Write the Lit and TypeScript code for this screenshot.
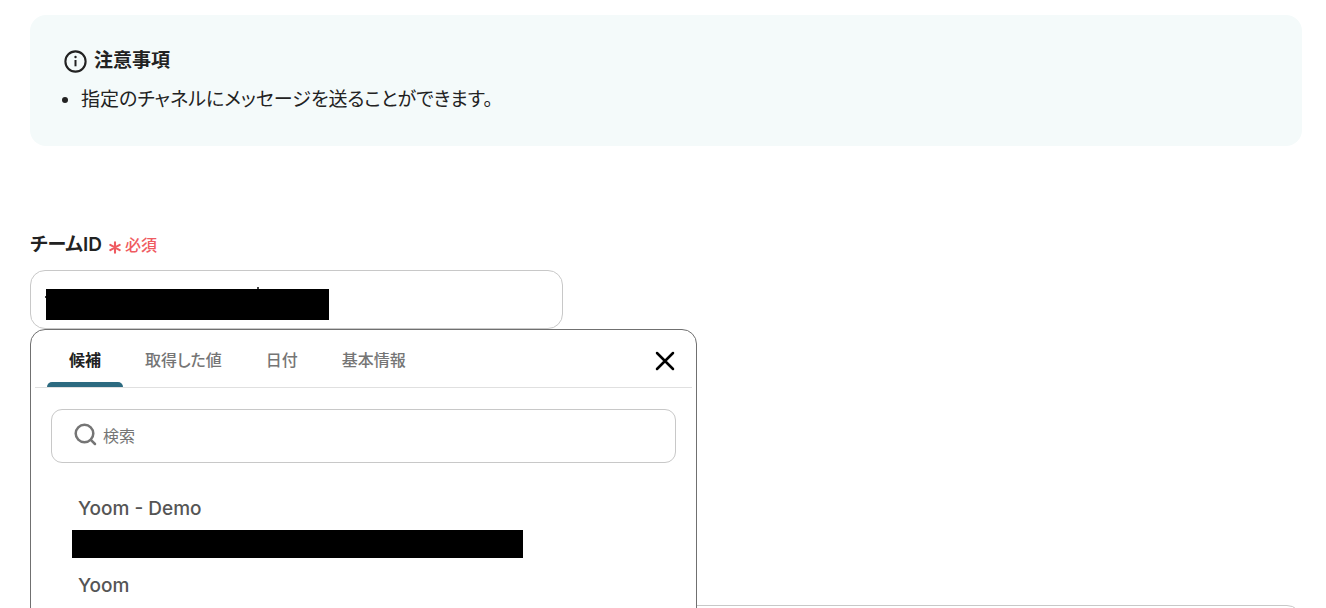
import { LitElement, html, css } from "lit";
import { customElement, state } from "lit/decorators.js";

@customElement("app-root")
export class AppRoot extends LitElement {
  static styles = css`
    * {
      box-sizing: border-box;
    }
    :host {
      display: block;
      height: 100vh;
      overflow: hidden;
      padding: 15px 24px 0 30px;
      background: #fff;
      color: #222;
      font-family: Inter, "Noto Sans CJK JP", sans-serif;
      font-feature-settings: "palt";
      font-size: 19px;
      line-height: 28px;
    }
    button,
    input,
    textarea {
      margin: 0;
      font: inherit;
      color: inherit;
      font-feature-settings: inherit;
    }
    button {
      padding: 0;
      border: 0;
      background: none;
      cursor: pointer;
    }
    svg {
      display: block;
      flex: none;
    }
    .notice {
      padding: 32px 34px;
      border-radius: 16px;
      background: #f4fafa;
    }
    .notice-title {
      display: flex;
      align-items: center;
      gap: 7px;
      margin: 0;
      font-size: 19px;
      font-weight: 600;
    }
    .notice-list {
      margin: 0;
      padding: 11px 0 0 17px;
    }
    .field {
      padding-top: 85px;
    }
    .field-head {
      display: flex;
      align-items: center;
      gap: 7px;
      padding-bottom: 11px;
    }
    .field-label {
      font-weight: 600;
    }
    .required {
      display: flex;
      align-items: center;
      gap: 4px;
      color: #ef5b61;
      font-size: 16px;
      font-weight: 500;
    }
    .required-mark {
      margin-top: 4px;
    }
    .field-control {
      position: relative;
      width: 533px;
      max-width: 100%;
    }
    .field-input {
      display: block;
      width: 100%;
      height: 59px;
      padding: 0 15px;
      border: 1px solid #c8c8c8;
      border-radius: 15px;
      outline: none;
      background: #fff;
    }
    .mask {
      position: absolute;
      top: 16px;
      left: 14px;
    }
    .panel {
      position: absolute;
      top: 100%;
      left: 0;
      z-index: 1;
      width: 667px;
      height: 420px;
      border: 1px solid #707070;
      border-radius: 15px;
      background: #fff;
    }
    .panel-head {
      display: flex;
      align-items: stretch;
      margin: 0 4px;
      padding: 0 17px 0 12px;
      border-bottom: 1px solid #e0e0e0;
    }
    .tabs {
      display: flex;
      flex: 1;
    }
    .tab-item {
      display: grid;
      grid-template-rows: 52px 5px;
    }
    .tab {
      padding: 8px 22px 0;
      color: #757575;
      font-size: 16px;
      font-weight: 500;
      line-height: 24px;
      white-space: nowrap;
    }
    .tab[aria-selected="true"] {
      color: #222;
      font-weight: 700;
    }
    .tab-bar {
      border-radius: 5px 5px 0 0;
      background: #2c6a80;
    }
    .close {
      display: flex;
      align-items: center;
      padding-top: 5px;
      color: #000;
    }
    .search {
      display: flex;
      align-items: center;
      gap: 6px;
      height: 54px;
      margin: 21px 20px 0;
      padding: 0 22px;
      border: 1px solid #c8c8c8;
      border-radius: 11px;
      color: #757575;
    }
    .search-icon {
      margin-bottom: 3px;
    }
    .search-input {
      flex: 1;
      min-width: 0;
      padding: 0;
      border: 0;
      outline: none;
      background: none;
      font-size: 16px;
    }
    .search-input::placeholder {
      color: #757575;
      opacity: 1;
    }
    .options {
      display: grid;
      gap: 14px;
      margin: 0;
      padding: 32px 41px 0;
      list-style: none;
    }
    .option {
      display: grid;
      justify-items: start;
      gap: 7px;
      width: 100%;
      padding: 0 6px;
      color: #555;
      font-weight: 500;
      text-align: left;
    }
    .option-mask {
      width: 451px;
      height: 28px;
      margin-left: -6px;
      background: #000;
    }
    .message {
      display: block;
      width: 100%;
      height: 120px;
      margin-top: 276px;
      border: 1px solid #c8c8c8;
      border-radius: 15px;
      outline: none;
      resize: none;
    }
  `;

  @state() private tab = 0;

  private tabs = ["候補", "取得した値", "日付", "基本情報"];

  private options = [
    { name: "Yoom - Demo", masked: true },
    { name: "Yoom", masked: false },
  ];

  render() {
    return html`
      <section class="notice">
        <h2 class="notice-title">
          <svg width="23" height="23" viewBox="0 0 23 23" fill="none" aria-hidden="true">
            <circle cx="11.5" cy="11.5" r="10.1" stroke="#222" stroke-width="2.1" />
            <path d="M11.5 10v6.3" stroke="#222" stroke-width="2" />
            <circle cx="11.5" cy="7" r="1.2" fill="#222" />
          </svg>
          注意事項
        </h2>
        <ul class="notice-list">
          <li>指定のチャネルにメッセージを送ることができます。</li>
        </ul>
      </section>

      <div class="field">
        <div class="field-head">
          <label class="field-label" for="team">チームID</label>
          <span class="required">
            <svg class="required-mark" width="12" height="13" viewBox="0 0 12 13" fill="none" stroke="currentColor" stroke-width="2.1" stroke-linecap="round" aria-hidden="true">
              <path d="M6 1.2v10.6M1.3 3.9l9.4 5.2M10.7 3.9 1.3 9.1" />
            </svg>
            必須
          </span>
        </div>
        <div class="field-control">
          <input class="field-input" id="team" type="text" />
          <svg class="mask" width="286" height="34" viewBox="0 0 286 34" aria-hidden="true">
            <path d="M2 3h283v31H2z" />
            <path d="M213 1h2v2h-2zM1 10h1v2H1z" fill="#444" />
          </svg>
          <div class="panel">
            <div class="panel-head">
              <div class="tabs" role="tablist">
                ${this.tabs.map(
                  (label, i) => html`
                    <div class="tab-item">
                      <button
                        class="tab"
                        role="tab"
                        aria-selected=${i === this.tab ? "true" : "false"}
                        @click=${() => (this.tab = i)}
                      >${label}</button>
                      ${i === this.tab ? html`<span class="tab-bar"></span>` : ""}
                    </div>
                  `
                )}
              </div>
              <button class="close" aria-label="閉じる">
                <svg width="20" height="20" viewBox="0 0 20 20" fill="none" stroke="currentColor" stroke-width="2.5" stroke-linecap="round" aria-hidden="true">
                  <path d="M2 2l16 16M18 2 2 18" />
                </svg>
              </button>
            </div>
            <div class="search">
              <svg class="search-icon" width="23" height="23" viewBox="0 0 23 23" fill="none" stroke="currentColor" stroke-width="2.5" stroke-linecap="round" aria-hidden="true">
                <circle cx="10.5" cy="10.5" r="8.8" />
                <path d="M16.8 16.8l4.2 4.2" />
              </svg>
              <input class="search-input" type="text" placeholder="検索" aria-label="検索" />
            </div>
            <ul class="options">
              ${this.options.map(
                (o) => html`
                  <li>
                    <button class="option">
                      ${o.name}
                      ${o.masked ? html`<span class="option-mask"></span>` : ""}
                    </button>
                  </li>
                `
              )}
            </ul>
          </div>
        </div>
      </div>

      <textarea class="message" aria-label="メッセージ"></textarea>
    `;
  }
}
